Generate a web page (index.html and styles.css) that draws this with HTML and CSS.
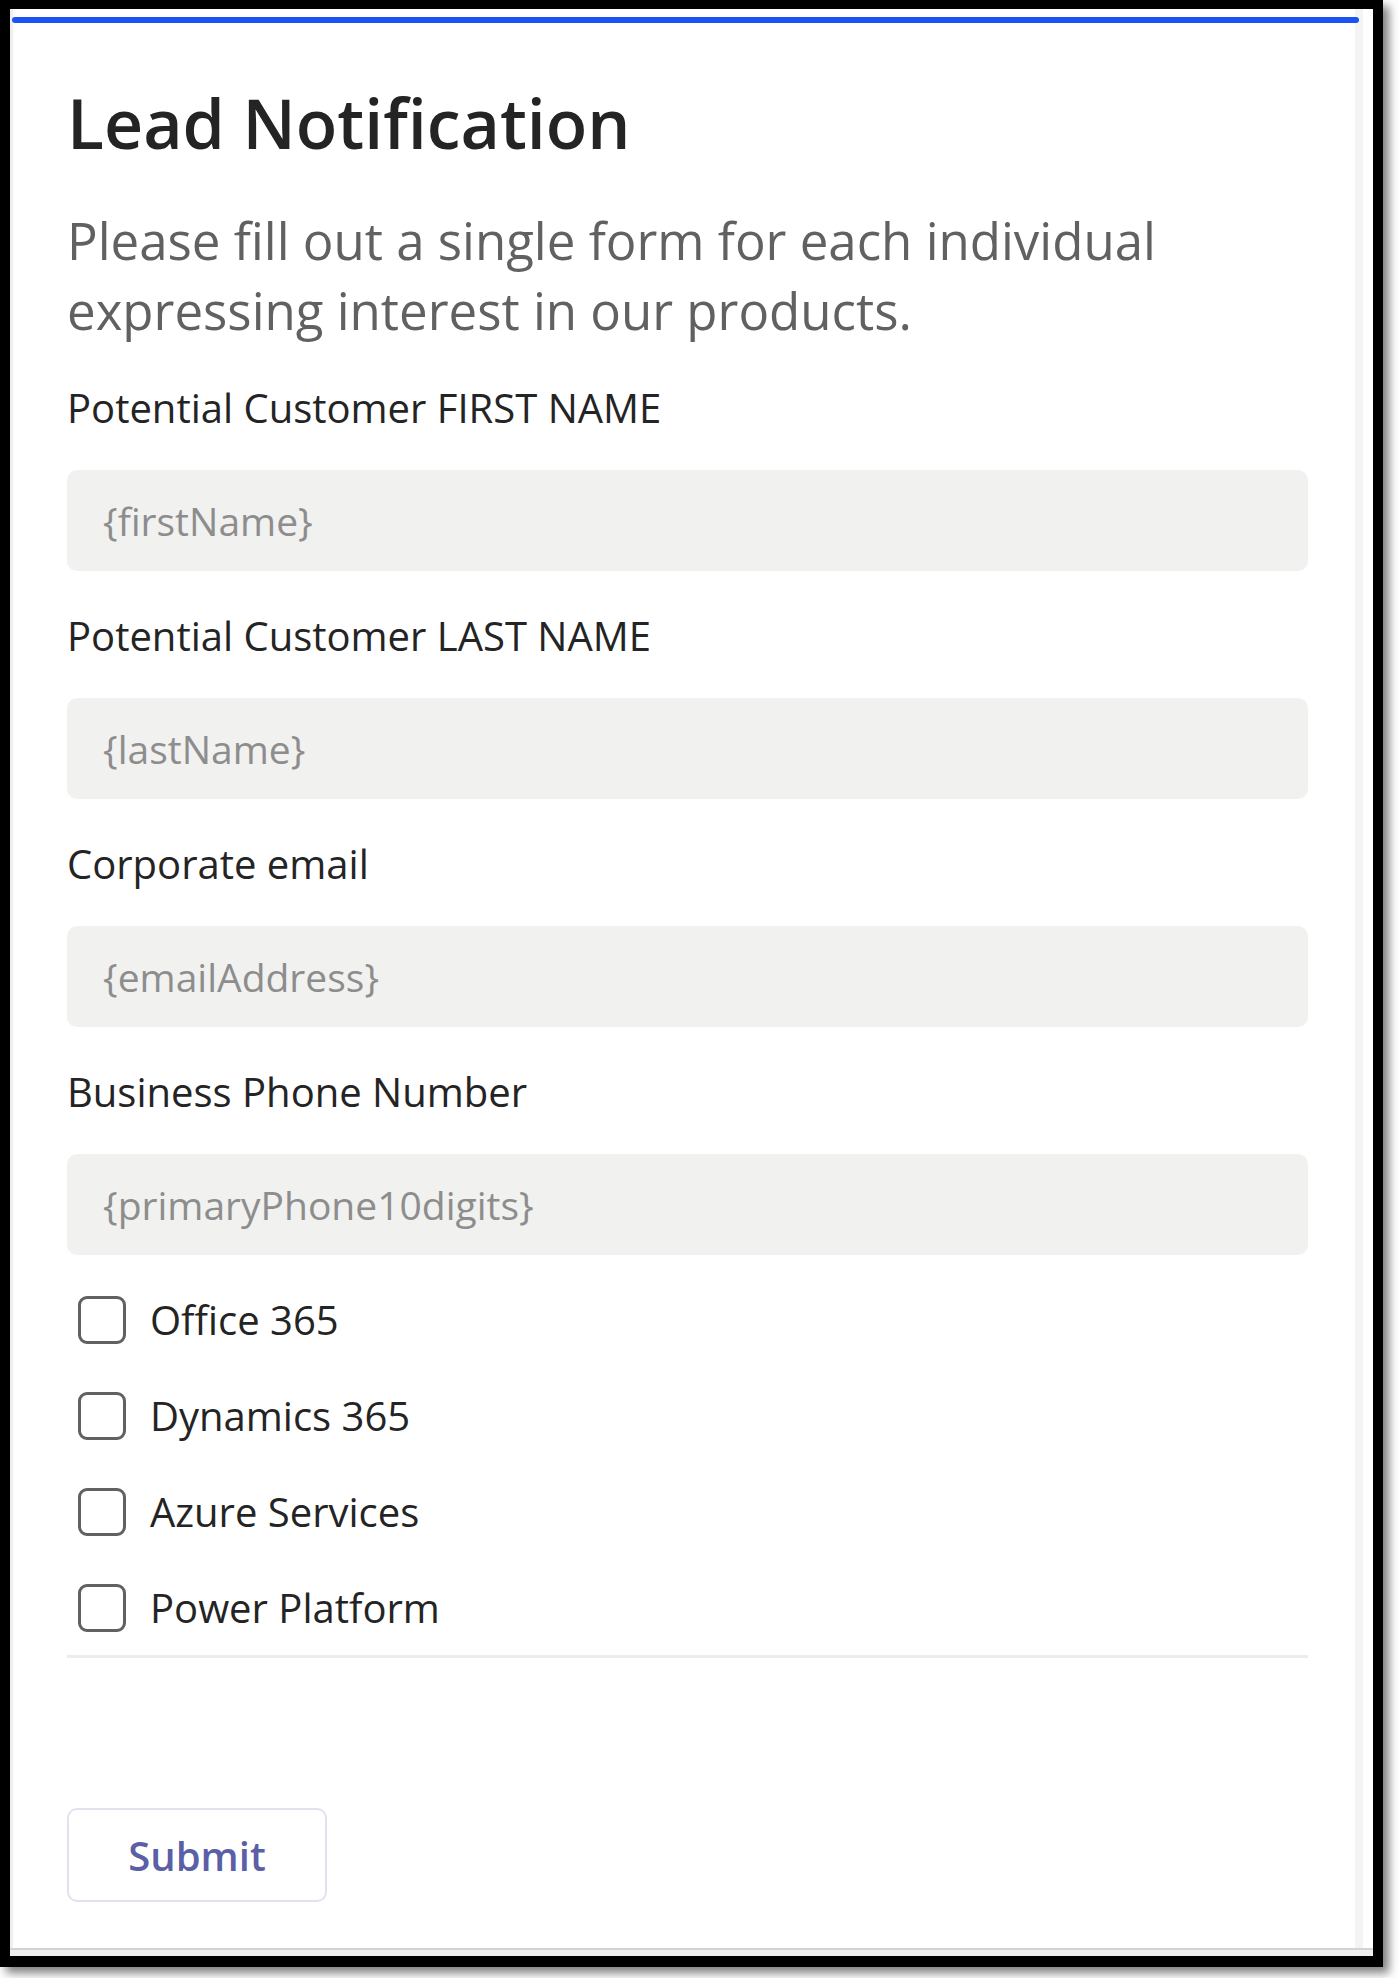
FILE: index.html
```html
<!DOCTYPE html>
<html lang="en">
<head>
<meta charset="utf-8">
<title>Lead Notification</title>
<link rel="stylesheet" href="styles.css">
</head>
<body>
<div class="frame">
  <div class="card">
    <div class="panel">
      <div class="accent"></div>
      <div class="content">
        <h1 class="title">Lead Notification</h1>
        <p class="desc">Please fill out a single form for each individual expressing interest in our products.</p>

        <div class="field">
          <div class="label">Potential Customer FIRST NAME</div>
          <div class="input">{firstName}</div>
        </div>
        <div class="field">
          <div class="label">Potential Customer LAST NAME</div>
          <div class="input">{lastName}</div>
        </div>
        <div class="field">
          <div class="label">Corporate email</div>
          <div class="input">{emailAddress}</div>
        </div>
        <div class="field">
          <div class="label">Business Phone Number</div>
          <div class="input">{primaryPhone10digits}</div>
        </div>

        <div class="checks">
          <div class="check"><span class="box"></span><span class="check-label">Office 365</span></div>
          <div class="check"><span class="box"></span><span class="check-label">Dynamics 365</span></div>
          <div class="check"><span class="box"></span><span class="check-label">Azure Services</span></div>
          <div class="check"><span class="box"></span><span class="check-label">Power Platform</span></div>
        </div>

        <div class="separator"></div>

        <div class="actions">
          <button class="submit" type="button">Submit</button>
        </div>
      </div>
    </div>
  </div>
  <div class="strip"></div>
</div>
</body>
</html>
```

FILE: styles.css
```css
html, body {
  margin: 0;
  padding: 0;
  background: #ffffff;
}

body {
  font-family: "Open Sans", "Noto Sans", "Liberation Sans", sans-serif;
  width: 1399px;
  height: 1978px;
  overflow: hidden;
}

.frame {
  box-sizing: border-box;
  width: 1383px;
  height: 1967px;
  border-style: solid;
  border-color: #000000;
  border-width: 9px 10px 11px 10px;
  background: #ffffff;
  box-shadow: 6px 6px 9px rgba(0, 0, 0, 0.5);
  display: flex;
  flex-direction: column;
}

.card {
  flex: 1;
  display: flex;
  border-bottom: 2px solid #d3d3d3;
  background: #ffffff;
}

.strip {
  height: 6px;
  background: #efefee;
}

.panel {
  flex: 1;
  margin-right: 10px;
  border-left: 3px solid #efefef;
  border-right: 8px solid #f4f4f4;
}

.accent {
  margin-top: 8px;
  margin-left: -1px;
  margin-right: -4px;
  height: 6px;
  border-radius: 3px;
  background: #1d52f4;
}

.content {
  padding: 0 47px 0 54px;
}

.title {
  margin: 57px 0 0 0;
  font-size: 68px;
  line-height: 85px;
  font-weight: 600;
  color: #242424;
}

.desc {
  margin: 40px 0 0 0;
  font-size: 51px;
  line-height: 70px;
  color: #616161;
}

.field {
  margin-top: 34px;
}

.field + .field {
  margin-top: 36px;
}

.label {
  font-size: 40px;
  line-height: 58px;
  color: #242424;
}

.input {
  margin-top: 33px;
  height: 101px;
  box-sizing: border-box;
  padding-left: 36px;
  display: flex;
  align-items: center;
  background: #f1f1f0;
  border-radius: 10px;
  font-size: 39px;
  color: #8d8d8d;
}

.checks {
  margin-top: 36px;
  display: flex;
  flex-direction: column;
  gap: 38px;
}

.check {
  display: flex;
  align-items: center;
  height: 58px;
  padding-left: 11px;
  gap: 24px;
}

.box {
  box-sizing: border-box;
  width: 48px;
  height: 48px;
  border: 3px solid #616161;
  border-radius: 9px;
  background: #ffffff;
}

.check-label {
  font-size: 40px;
  line-height: 58px;
  color: #242424;
}

.separator {
  margin-top: 18px;
  height: 3px;
  background: #ececec;
}

.actions {
  margin-top: 150px;
}

.submit {
  box-sizing: border-box;
  width: 260px;
  height: 94px;
  border: 2px solid #e1e1f1;
  border-radius: 10px;
  background: #ffffff;
  font-family: "Open Sans", "Noto Sans", "Liberation Sans", sans-serif;
  font-size: 40px;
  font-weight: 600;
  color: #5b5fa7;
  padding: 0;
}
```
